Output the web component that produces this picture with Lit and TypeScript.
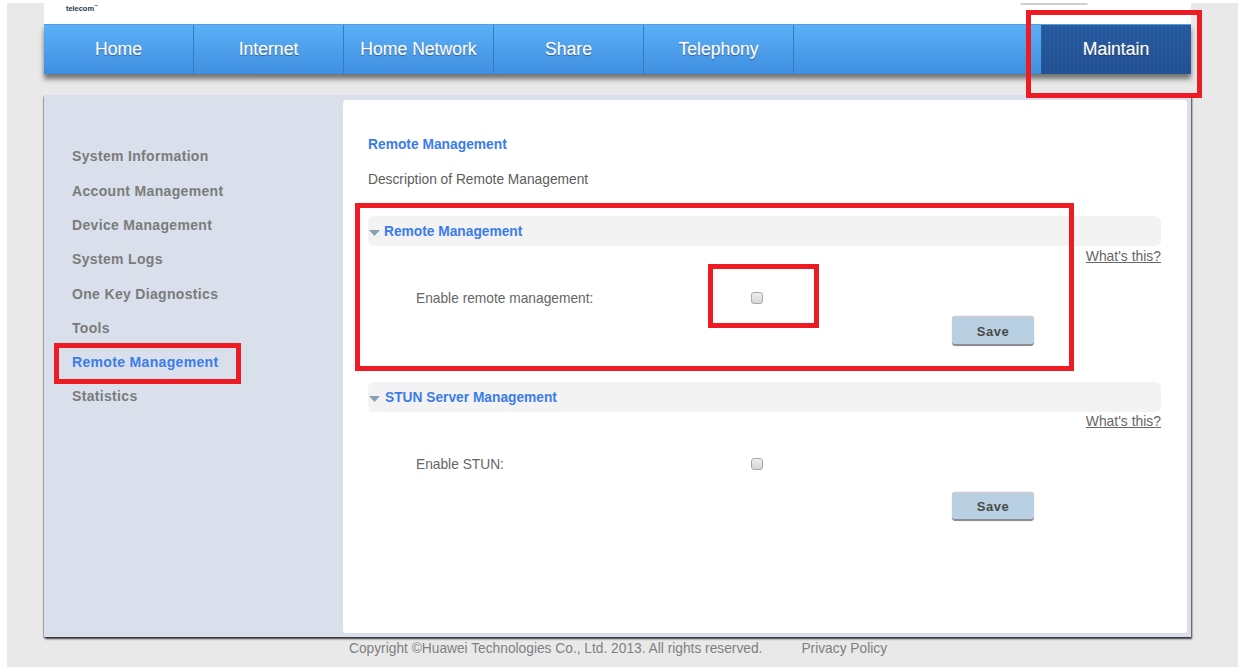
import { LitElement, html, css } from "lit";
import { customElement } from "lit/decorators.js";

const NAV = ["Home", "Internet", "Home Network", "Share", "Telephony"];
const SIDE = ["System Information", "Account Management", "Device Management", "System Logs", "One Key Diagnostics", "Tools", "Remote Management", "Statistics"];

@customElement("app-root")
export class AppRoot extends LitElement {
  static styles = css`
    :host { display: block; position: relative; width: 1248px; height: 672px; background: #fff; overflow: hidden;
      font-family: "Liberation Sans", Arial, sans-serif; }
    .page { margin: 3px 10px 0 7px; height: 664px; background: #e9e9e9; padding-right: 47px; padding-left: 37px; box-sizing: border-box; display: flex; flex-direction: column; }
    .top { height: 21px; background: #fff; display: flex; justify-content: space-between; align-items: flex-start; padding: 0 103px 0 22px; flex: none; }
    .logo { font-size: 7.5px; font-weight: bold; color: #1c3a4c; line-height: 10px; margin-top: 1px; letter-spacing: -0.05px; }
    .logo sup { font-size: 4px; line-height: 0; }
    .tab { width: 68px; height: 2px; background: #cfcfcf; border-radius: 0 0 3px 3px; }
    .nav { height: 50px; flex: none; display: flex; justify-content: space-between; background: linear-gradient(#5bb0f7, #3f8fe0);
      border-top: 1px solid #5a9bdc; box-sizing: border-box; box-shadow: 0 5px 5px rgba(50,50,50,.65); }
    .items { display: flex; }
    .item { border-right: 1px solid #2f7cc7; color: #fff; font-size: 17.6px; display: flex; align-items: center; justify-content: center; text-shadow: 0 1px 1px rgba(30,60,110,.7), 0 0 1px rgba(255,255,255,.5); padding-bottom: 1px; box-sizing: border-box; width: 150px; }
    .active { width: 150px; color: #fff; font-size: 17.6px; display: flex; align-items: center; justify-content: center; padding-bottom: 1px;
      background: repeating-linear-gradient(90deg, rgba(255,255,255,.03) 0 2px, transparent 2px 4px), linear-gradient(#24599f, #1f4e91); text-shadow: 0 1px 1px rgba(0,0,30,.5), 0 0 1px rgba(255,255,255,.5); }
    .panel { margin-top: 21px; height: 542px; flex: none; background: #d9e0eb; display: flex; box-shadow: 1px 2px 2px rgba(40,40,40,.9), -1px 1px 1px rgba(90,90,90,.5); border-radius: 2px 0 0 0; }
    .side { width: 299px; flex: none; padding: 44.4px 0 0 0; box-sizing: border-box; }
    .side div { height: 34.3px; line-height: 34.3px; padding-left: 28px; font-size: 14px; font-weight: bold; color: #7b7b7b; letter-spacing: .33px; white-space: nowrap; }
    .side div.on { color: #3b7cea; }
    .main { flex: 1; margin: 5px 4px 4px 0; background: #fff; border-radius: 3px; padding: 36px 26px 0 25px; color: #555; min-width: 0; }
    h1 { margin: 0; font-size: 13.8px; line-height: 17px; font-weight: bold; color: #3b7cea; }
    .desc { margin: 18px 0 0; font-size: 13.75px; line-height: 17px; color: #5c5c5c; }
    .sec-head { margin-top: 28px; height: 30px; background: #f3f3f3; border-radius: 6px; display: flex; align-items: center; gap: 4px; padding-left: 1px; font-size: 13.75px; font-weight: bold; color: #3b7cea; box-sizing: border-box; }
    .sec-head svg { margin-top: 3px; flex: none; }
    .sec-head.second { margin-top: 36px; gap: 5px; padding-top: 1px; }
    .help { display: flex; justify-content: flex-end; height: 20px; line-height: 20px; font-size: 13.9px; color: #666; }
    .help.second { line-height: 18px; }
    .help span { text-decoration: underline; }
    .row { display: grid; grid-template-columns: 335px 12px; align-items: center; padding-left: 48px; margin-top: 22px; height: 20px; font-size: 13.75px; color: #666; }
    .row.second span { padding-top: 1px; }
    .cb { appearance: none; margin: 0; width: 12px; height: 12px; border: 1px solid #aaa; border-radius: 3px; background: linear-gradient(#eee, #d6d6d6); box-sizing: border-box; }
    .btnrow { display: flex; padding-left: 584px; margin-top: 8px; }
    .btnrow.second { margin-top: 18px; }
    .save { width: 82px; height: 29.5px; box-sizing: border-box; border: none; border-radius: 4px; background: #b8d0e2; border-bottom: 2px solid #8b8f93; box-shadow: 0 0 1px #999, inset 0 1px 0 #ccc; font-family: inherit; font-size: 13px; font-weight: bold; color: #4a4a4a; letter-spacing: .5px; padding: 3px 0 0; }
    .foot { flex: none; display: flex; margin-left: 305px; margin-top: 3px; gap: 39px; font-size: 13.75px; line-height: 18px; color: #808080; white-space: nowrap; }
    .mark { position: absolute; border: 5px solid #ed1c24; box-sizing: border-box; pointer-events: none; }
    .m1 { left: 1026px; top: 10px; width: 176px; height: 88px; }
    .m2 { left: 355px; top: 203px; width: 719px; height: 168px; }
    .m3 { left: 708px; top: 264px; width: 111px; height: 64px; }
    .m4 { left: 54px; top: 343px; width: 187px; height: 41px; }
  `;

  private arrow() {
    return html`<svg width="11" height="6" viewBox="0 0 11 6"><path d="M0 0H11L5.5 6Z" fill="#86a0b6"/></svg>`;
  }

  render() {
    return html`
      <div class="page">
        <div class="top">
          <div class="logo">telecom<sup>™</sup></div>
          <div class="tab"></div>
        </div>
        <div class="nav">
          <div class="items">${NAV.map((n) => html`<div class="item">${n}</div>`)}</div>
          <div class="active">Maintain</div>
        </div>
        <div class="panel">
          <div class="side">
            ${SIDE.map((s) => html`<div class=${s === "Remote Management" ? "on" : ""}>${s}</div>`)}
          </div>
          <div class="main">
            <h1>Remote Management</h1>
            <p class="desc">Description of Remote Management</p>
            <div class="sec-head">${this.arrow()}<span>Remote Management</span></div>
            <div class="help"><span>What's this?</span></div>
            <div class="row"><span>Enable remote management:</span><input class="cb" type="checkbox" /></div>
            <div class="btnrow"><button class="save">Save</button></div>
            <div class="sec-head second">${this.arrow()}<span>STUN Server Management</span></div>
            <div class="help second"><span>What's this?</span></div>
            <div class="row second"><span>Enable STUN:</span><input class="cb" type="checkbox" /></div>
            <div class="btnrow second"><button class="save">Save</button></div>
          </div>
        </div>
        <div class="foot"><span>Copyright ©Huawei Technologies Co., Ltd. 2013. All rights reserved.</span><span>Privacy Policy</span></div>
      </div>
      <div class="mark m1"></div>
      <div class="mark m2"></div>
      <div class="mark m3"></div>
      <div class="mark m4"></div>
    `;
  }
}
